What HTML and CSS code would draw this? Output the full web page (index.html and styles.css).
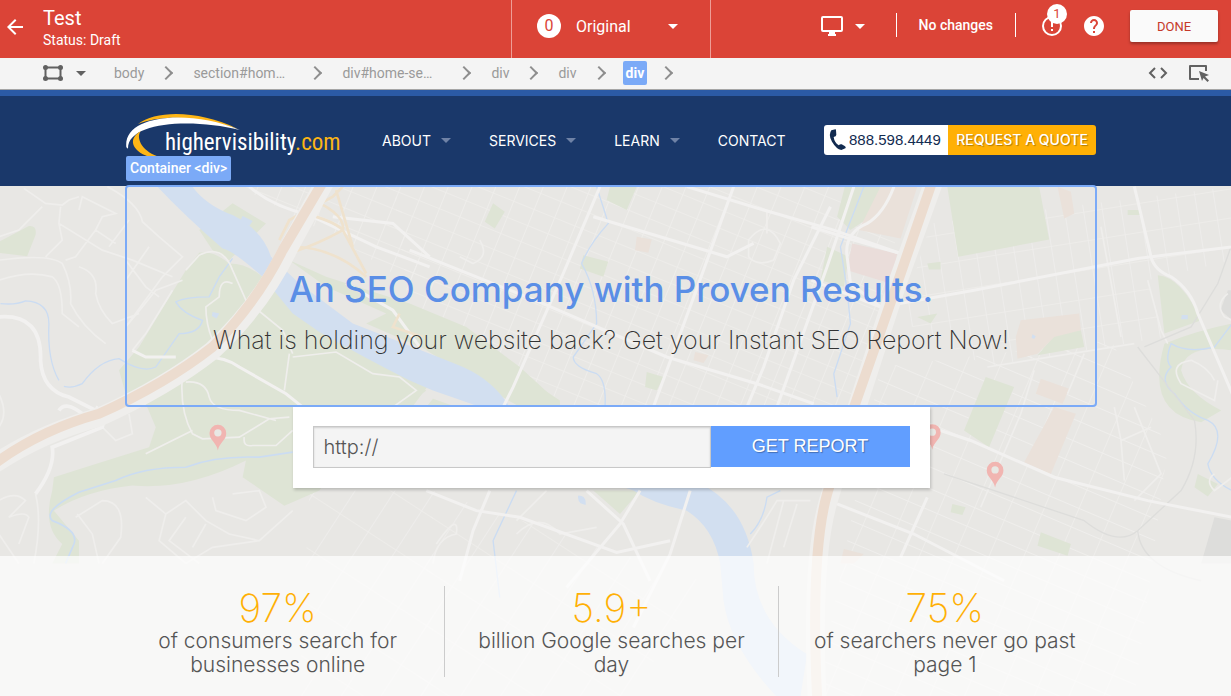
FILE: index.html
```html
<!DOCTYPE html>
<html lang="en">
<head>
<meta charset="utf-8">
<meta name="viewport" content="width=device-width, initial-scale=1">
<title>Test – Original</title>
<link rel="stylesheet" href="styles.css">
</head>
<body>
<header class="topbar">
  <div class="topbar-left">
    <button class="icon-btn back" aria-label="Back">
      <svg width="16" height="16" viewBox="0 0 16 16"><path fill="#fff" d="M16 7H3.830l5.590-5.590L8 0 0 8l8 8 1.410-1.410L3.830 9H16z"/></svg>
    </button>
    <div class="titles">
      <h1 class="exp-name">Test</h1>
      <p class="exp-status">Status: Draft</p>
    </div>
  </div>
  <button class="variant">
    <span class="variant-num">0</span>
    <span class="variant-name">Original</span>
    <svg width="10" height="5" viewBox="0 0 10 5"><path d="M0 0h10L5 5z" fill="#fff"/></svg>
  </button>
  <div class="topbar-right">
    <button class="icon-btn device" aria-label="Device">
      <svg width="22" height="20" viewBox="0 0 22 20"><path d="M2 0h18a2 2 0 0 1 2 2v12a2 2 0 0 1-2 2h-6v2h1v2H7v-2h1v-2H2a2 2 0 0 1-2-2V2a2 2 0 0 1 2-2zM2 2v12h18V2z" fill="#fff" fill-rule="evenodd"/></svg>
      <svg width="10" height="5" viewBox="0 0 10 5"><path d="M0 0h10L5 5z" fill="#fff"/></svg>
    </button>
    <p class="changes">No changes</p>
    <button class="icon-btn alert" aria-label="Alerts">
      <svg width="20" height="20" viewBox="0 0 20 20"><circle cx="10" cy="10" r="9" fill="none" stroke="#fff" stroke-width="2"/><path d="M9 5h2v6H9zM9 13h2v2H9z" fill="#fff"/></svg>
      <span class="badge">1</span>
    </button>
    <button class="icon-btn" aria-label="Help">
      <svg width="20" height="20" viewBox="2 2 20 20"><path fill="#fff" d="M12 2C6.480 2 2 6.480 2 12s4.480 10 10 10 10-4.480 10-10S17.520 2 12 2zm1 17h-2v-2h2v2zm2.070-7.750l-.9.920C13.450 12.900 13 13.500 13 15h-2v-.5c0-1.100.45-2.100 1.170-2.830l1.240-1.260c.37-.36.590-.86.590-1.410 0-1.100-.9-2-2-2s-2 .9-2 2H8c0-2.210 1.790-4 4-4s4 1.790 4 4c0 .88-.36 1.680-.93 2.250z"/></svg>
    </button>
    <button class="done">DONE</button>
  </div>
</header>

<nav class="crumbs" aria-label="Element path">
  <button class="icon-btn shape" aria-label="Selection mode">
    <svg width="20" height="16" viewBox="0 0 20 16" fill="#616161"><path d="M2.500 2.500h15v11h-15z" fill="none" stroke="#616161" stroke-width="2"/><circle cx="2.500" cy="2.500" r="2.500"/><circle cx="17.500" cy="2.500" r="2.500"/><circle cx="2.500" cy="13.500" r="2.500"/><circle cx="17.500" cy="13.500" r="2.500"/></svg>
    <svg width="10" height="5" viewBox="0 0 10 5"><path d="M0 0h10L5 5z" fill="#616161"/></svg>
  </button>
  <ol class="path">
    <li><a href="#">body</a></li>
    <li class="long"><a href="#">section#hom…</a></li>
    <li class="long"><a href="#">div#home-se…</a></li>
    <li><a href="#">div</a></li>
    <li><a href="#">div</a></li>
    <li><a href="#" class="current">div</a></li>
  </ol>
  <div class="tools">
    <button class="icon-btn" aria-label="Edit code">
      <svg width="20" height="12" viewBox="0 0 20 12" fill="none" stroke="#616161" stroke-width="2"><path d="M7 1L2 6l5 5M13 1l5 5-5 5"/></svg>
    </button>
    <button class="icon-btn" aria-label="Select element">
      <svg width="21" height="18" viewBox="0 0 21 18"><path d="M18 7V2H2v13h9" fill="none" stroke="#616161" stroke-width="2" stroke-linejoin="round"/><path d="M11 7l10 4-4 1.500 4 4-1.500 1.500-4-4-1.500 3z" fill="#616161"/></svg>
    </button>
  </div>
</nav>

<main class="site">
  <header class="site-header">
    <div class="container nav-row">
      <a class="logo" href="#" aria-label="highervisibility.com">
        <svg class="swoosh" width="114" height="44" viewBox="0 0 342 132">
          <path d="M36 33C90-9 220-9 335 48C225 10 110 2 36 33z" fill="#fdb515"/>
          <path d="M1 103C-10 5 190-12 341 51C200 16 5 25 6 107z" fill="#fff"/>
          <path d="M44 55C30 72 44 112 94 130L70 132C12 112 8 75 44 55z" fill="#fdb515"/>
        </svg>
        <span class="logo-text">highervisibility<span class="tld">.com</span></span>
      </a>
      <nav class="menu" aria-label="Main">
        <a class="has-sub" href="#">ABOUT</a>
        <a class="has-sub" href="#">SERVICES</a>
        <a class="has-sub" href="#">LEARN</a>
        <a href="#">CONTACT</a>
      </nav>
      <div class="cta">
        <a class="phone" href="tel:8885984449">
          <svg width="17" height="22" viewBox="0 0 51 66"><path d="M19 1L7 4Q-3 18 9 38Q22 60 37 63L49 58Q52 54 47 51L38 46Q34 44 29 49Q16 40 14 24Q22 22 22 17L21 4Q21 0 19 1z" fill="#122b50"/></svg>
          888.598.4449</a>
        <a class="quote" href="#">REQUEST A QUOTE</a>
      </div>
    </div>
  </header>

  <section class="hero">
    <svg class="map" viewBox="0 18 3693 1530" preserveAspectRatio="xMidYMin slice" aria-hidden="true">
      <defs>
        <pattern id="g1" width="66" height="52" patternUnits="userSpaceOnUse" patternTransform="rotate(22)"><path d="M0 0H66M0 0V52" class="st"/></pattern>
        <pattern id="g2" width="56" height="86" patternUnits="userSpaceOnUse" patternTransform="rotate(-9)"><path d="M0 0H56M0 0V86" class="st"/></pattern>
        <pattern id="g3" width="96" height="60" patternUnits="userSpaceOnUse" patternTransform="rotate(23)"><path d="M0 0H96M0 0V60" class="st"/></pattern>
        <pattern id="g4" width="100" height="140" patternUnits="userSpaceOnUse" patternTransform="rotate(33)"><path d="M0 0H100M0 0V140" class="st"/></pattern>
        <g id="pin"><path d="M0 75C-4 50-25 45-25 23A25 25 0 0 1 25 23C25 45 4 50 0 75z" fill="#f1b5b1"/><circle cy="22" r="11" fill="#e8e8e4"/></g>
      </defs>
      <rect y="18" width="3693" height="1530" fill="#e8e7e4"/>

      <!-- street grids -->
      <path d="M720 20H1180L1290 330 1180 280 1040 190z" fill="url(#g1)"/>
      <path d="M1180 20H2720L2570 700H1700L1230 400z" fill="url(#g1)"/>
      <path d="M2790 130L3693 20V240L3440 300L3490 470L2960 560L2700 420z" fill="url(#g2)"/>
      <path d="M2640 560L3330 480L3500 800L3400 1548H2450z" fill="url(#g3)"/>
      <path d="M1300 930L2100 1200L1900 1548H1250z" fill="url(#g4)"/>
      <path d="M930 930H1300V1548H900z" fill="url(#g4)"/>

      <!-- parks -->
      <g class="park">
        <path d="M0 185L90 138Q115 135 110 165L85 228L0 218z"/>
        <path d="M600 150L700 70L800 130L730 200L690 240L640 210z"/>
        <path d="M600 218Q640 210 690 250Q750 250 800 300L900 410L1060 500L1290 610L1230 690L1150 760L1000 870L960 930L855 975L730 890L740 840Q560 930 400 915Q260 930 165 990L240 1080L240 1148H160L190 1090Q130 1040 160 930L165 890L290 850L450 800L470 740L440 670L380 640L360 570L420 500L560 270z"/>
        <path d="M870 240L980 320L1160 400L1100 430L1400 560L1550 650L1680 680V660L1530 560L1300 420L1230 370L980 290z"/>
        <path d="M1230 370L1400 440L1560 560L1680 670V690H1580L1490 640L1280 510z"/>
        <path d="M1480 70L1515 95 1485 145 1455 125zM1750 225L1825 245 1810 290 1740 265zM1830 20H1910L1880 90L1820 60zM1940 575L1990 590 1970 630 1935 620zM1780 930H1920L1860 1000z"/>
        <path d="M2840 20H3115L3145 178L2873 230zM2533 20H2660L2610 110L2550 150L2510 110zM2480 200L2545 230L2530 320L2460 300z"/>
        <path d="M2955 590L3040 620L2965 800L2890 750zM3170 455L3240 450 3250 500 3110 525zM3470 285Q3540 290 3600 420L3490 460zM3490 490Q3590 450 3693 430V510Q3550 490 3540 570Q3560 640 3660 690L3600 725Q3430 700 3490 490z"/>
        <path d="M2855 970L2895 980 2885 1003 2850 995zM3120 1055L3210 1090 3200 1125 3110 1095zM3590 880L3650 910 3620 948 3580 920zM2780 250L2820 245V268H2785zM2750 410L2810 400 2790 430zM3380 90h40v15h-40z"/>
      </g>
      <g class="tan">
        <path d="M2640 20H2750L2700 175L2575 150zM3170 20L3210 35 3220 100 3190 115zM3060 420L3235 400 3240 450 3160 470 3110 520 3050 535 3045 470zM3120 595L3205 625 3185 670 3105 640zM3160 680L3225 700 3150 880 3070 845zM1910 170L1955 178 1945 218 1905 210zM2085 515L2125 525 2110 548 2080 540zM2530 1105L2590 1120 2560 1148H2520z"/>
        <path d="M2555 190L2690 220 2670 310 2540 270z" fill="#eaddda"/>
      </g>
      <path d="M3640 1010L3693 1020V1148H3600zM3680 330h13v90l-35-30z" fill="#dddddb"/>

      <!-- river -->
      <g fill="#d2dff0">
        <path d="M475 20H580Q620 75 700 105Q790 150 815 230L900 310L1060 430Q1290 520 1390 560Q1480 600 1530 680Q1700 760 1920 880Q2060 870 2150 940Q2240 1010 2260 1148Q2260 1320 2420 1420L2400 1548H2330Q2190 1400 2170 1260L2160 1148Q2140 1040 2060 990Q1960 970 1900 930Q1650 850 1500 700L1300 630L1230 600Q1090 530 960 455L880 400L790 290Q700 210 670 205Q560 110 475 20z"/>
        <path d="M730 108l30 15-10 15-28-14zM640 395l20 5-8 15-14-8zM1735 945q25 0 22 28l-15-5q-10-10-7-23zM3542 404h18v13h-20zM3095 462l10 6-5 8-8-4z"/>
      </g>
      <path class="park" d="M1230 600L1280 630L1235 665L1190 670zM1300 655L1370 680H1280z"/>
      <g class="water">
        <path d="M700 235L660 290L630 350Q560 350 530 365Q550 400 610 420Q600 460 540 460L470 560Q430 580 360 535Q300 540 250 610Q220 625 195 618"/>
        <path d="M5 370Q50 375 80 362Q150 365 150 430Q145 540 180 600"/>
        <path d="M880 815L780 830Q650 825 560 860Q430 860 350 900L240 935Q130 990 160 1020Q240 1050 225 1090L200 1148" stroke-width="5"/>
        <path d="M1790 20L1825 130Q1770 190 1745 250Q1790 330 1790 430L1720 530Q1720 560 1790 580Q1820 600 1815 680M2590 20L2520 200L2540 330L2550 430L2500 580L2510 650"/>
        <path d="M1550 930L1480 1080L1500 1250M2250 1060Q2290 1020 2300 950L2340 930"/>
        <path d="M3693 430L3640 500Q3560 520 3510 490Q3490 540 3510 560Q3470 600 3520 640Q3560 700 3620 720Q3680 750 3620 850Q3630 900 3693 930"/>
      </g>

      <!-- minor streets -->
      <g class="st">
        <path d="M75 25L140 70L190 75L210 60L240 50M180 130L190 180L140 230M185 80L180 130L310 210L400 240L520 290M240 90L250 50L350 100L310 110L290 150L350 190M325 20Q420 70 430 125L480 170L550 230L490 290L380 440M380 240L440 320L480 350M450 200L380 300M0 240Q150 220 190 250Q220 310 215 370Q250 440 320 490M0 300Q90 270 160 290Q190 310 190 400L240 440M240 260Q300 280 290 340Q300 390 340 430L420 400M330 200L390 120M130 80L60 150L0 170M290 150L230 230L200 240"/>
        <path d="M560 270L600 225Q670 190 700 270L740 360L850 450L880 520M520 330L440 460L400 510M380 440L430 380L470 330L550 300M700 310Q660 290 660 350L620 380Q620 430 640 480M0 640Q30 700 0 740M310 740L350 780L400 760L390 700"/>
        <path d="M550 580Q540 690 580 760L610 775L720 770L810 715L870 710M560 605Q620 600 630 650Q640 690 720 690L830 720M735 770Q730 800 760 795H830L880 750M440 820L580 750M870 520L855 630M880 530L1010 515L1120 580L1200 590L1250 630L1180 680"/>
        <path d="M0 960Q50 930 80 960L30 1010Q80 990 90 1010L60 1090M110 940Q130 1020 105 1148M0 1060L60 1148M230 1010L310 960Q380 960 365 1070L310 1148M235 1000L280 1060L300 1148M440 950L500 1000L480 1080L560 1148M500 1000L560 960L620 1020L690 1060L780 1080M560 1010L510 1080L600 1148M620 1030L580 1100M700 940L780 930L800 980L740 1020L650 990L640 950M880 990L780 1080L640 1100L560 1148"/>
        <path d="M1310 1090Q1380 990 1370 1060Q1310 1070 1300 1148M1550 1020L1640 930M1550 1060Q1620 990 1680 1060L1790 1040M2240 1100Q2300 1010 2330 960H2430M2350 960L2300 1148M2390 970L2350 1100"/>
        <path d="M1440 180Q1470 230 1420 250L1380 230M2245 180Q2300 110 2340 190L2320 240Q2270 260 2245 230zM2300 90V160M3640 600Q3620 560 3570 540Q3500 550 3540 610L3640 660L3650 600M3680 340Q3640 370 3670 410L3693 420M3640 880Q3610 900 3640 930L3693 890"/>
        <path d="M3440 300L3480 450L3500 490M3300 140L3360 470M2960 560L3400 490M3100 570L3060 700L2940 980M3250 520L3200 640M3340 680L3360 780L3450 740M3360 780L3370 900M3400 680L3480 880L3400 960"/>
      </g>
      <path d="M2830 880L3250 1020Q3350 1100 3410 1050L3540 930Q3600 830 3580 720L3410 500M3410 1050Q3420 1160 3600 1200M3430 500L3570 440L3650 310L3693 190" fill="none" stroke="#dddddb" stroke-width="4"/>

      <!-- arterials -->
      <g class="rd">
        <path d="M750 20Q820 80 930 105L1130 200L1290 260M1230 210L1630 370L2000 530L2270 610L2440 670M2060 20L2290 90L2500 150L2700 220M1780 110L2180 230L2260 190M1800 20L1690 280L1540 620L1500 700M2200 20L2110 270L1960 680M2490 80L2380 300L2290 560L2240 680M2560 20L2480 260L2330 680M2433 300L2640 380L2920 330L3410 235L3693 200"/>
        <path d="M3400 20L3450 230Q3460 270 3510 290Q3570 330 3590 400L3693 640M2820 750L2910 780L3160 890L3440 960L3693 1010M2510 970L2740 1060L3010 1200M1280 930L1430 990L1560 1010L1850 1115L2010 1080M1470 930L1420 1050L1380 1200M1760 930L1870 1030L1950 1200M1920 930L1860 1030L1700 1220M2070 930L2010 1120L1900 1340M2700 1130L2780 950"/>
        <path d="M2680 20Q2650 100 2600 130Q2530 160 2540 230L2550 310L2640 380M2433 140L2560 180L2700 220M2640 410L2560 680M400 510L440 530L530 530M615 530Q680 530 720 560L860 640L910 680M1040 310L1180 390L1260 500M1000 110L1180 130L1290 230"/>
        <path d="M0 410Q130 400 125 540Q130 630 210 650L290 690M180 690Q200 660 250 700M290 680Q320 700 310 740L160 800Q170 860 110 940" stroke-width="11"/>
      </g>
      <g fill="none" stroke="#efe2cd" stroke-width="8">
        <path d="M840 180L870 120L1000 50L1030 20M870 220Q960 190 1030 150Q1040 100 920 50M910 100Q1000 120 1030 150L1100 280M880 200Q1000 200 1100 290M1010 30L1060 200M1200 400L1180 440L1270 470"/>
      </g>

      <!-- freeways -->
      <g fill="none" stroke-linejoin="round">
        <path d="M-20 855Q120 760 300 710Q500 620 640 510Q790 370 870 200L985 -10M2805 -10L2690 310L2550 740L2490 940Q2430 1120 2450 1548" stroke="#efeeec" stroke-width="56"/>
        <path d="M-20 855Q120 750 300 700Q500 610 640 500Q770 370 850 210L980 -10M2800 -10L2690 310L2540 740L2480 940Q2430 1120 2450 1548" stroke="#ecdccf" stroke-width="30"/>
      </g>

      <use href="#pin" x="656" y="735"/>
      <use href="#pin" x="2795" y="733"/>
      <use href="#pin" x="2983" y="846"/>
    </svg>

    <div class="container pitch">
      <span class="tag">Container &lt;div&gt;</span>
      <h2 class="headline">An SEO Company with Proven Results.</h2>
      <p class="sub">What is holding your website back? Get your Instant SEO Report Now!</p>
    </div>
    <form class="report">
      <input class="url" type="text" value="http://" aria-label="Website address">
      <button class="go" type="button">GET REPORT</button>
    </form>
    <div class="stats">
      <ul class="stat-list">
        <li><strong>97%</strong>of consumers search for businesses online</li>
        <li><strong>5.9+</strong>billion Google searches per day</li>
        <li><strong>75%</strong>of searchers never go past page 1</li>
      </ul>
    </div>
  </section>
</main>
</body>
</html>
```

FILE: styles.css
```css
* { box-sizing: border-box; }
body { margin: 0; font-family: Roboto, "Liberation Sans", sans-serif; background: #e8e7e4; }
h1, h2, p, ul, ol { margin: 0; padding: 0; font-weight: 400; }
ul, ol { list-style: none; }
a { color: inherit; text-decoration: none; }
button { font: inherit; border: 0; background: none; padding: 0; color: inherit; cursor: pointer; }
svg { display: block; flex: none; }

/* editor top bar */
.topbar { display: grid; grid-template-columns: 511fr 200px 520fr; height: 58px; background: #db4437; color: #fff; }
.topbar-left { display: flex; align-items: center; gap: 20px; padding: 0 0 4px 7px; }
.icon-btn { display: flex; align-items: center; }
.exp-name { font-size: 20px; line-height: 22px; padding-top: 4px; }
.exp-status { font-size: 14px; line-height: 22px; }
.variant { display: flex; align-items: center; padding: 0 32px 6px 25px; border: solid #ee9d96; border-width: 0 1px; font-size: 16px; }
.variant-num { width: 24px; height: 24px; margin-right: 15px; border-radius: 50%; background: #fff; color: #db4437; line-height: 24px; }
.variant-name { flex: 1; text-align: left; }
.topbar-right { display: flex; align-items: center; justify-content: flex-end; gap: 22px; padding: 0 13px 6px 0; }
.device { gap: 12px; margin-right: 9px; }
.changes { padding: 0 22px; border: solid #fff; border-width: 0 1px; font-size: 14px; font-weight: 500; line-height: 24px; margin: 0 4px 2px 0; }
.alert { position: relative; }
.badge { position: absolute; left: 5px; top: -12px; width: 20px; height: 20px; border-radius: 50%; background: #fff; color: #db4437; font-size: 13px; line-height: 20px; text-align: center; }
.done { width: 88px; height: 32px; margin-left: 4px; border-radius: 2px; background: #fafafa; color: #c53929; font-size: 13px; box-shadow: 0 2px 3px rgba(0, 0, 0, .3); }

/* element path */
.crumbs { display: flex; align-items: center; height: 32px; padding: 0 22px 1px 43px; background: #f4f4f4; border-bottom: 1px solid #a6a6a6; color: #9a9a9a; font-size: 14px; }
.shape { gap: 13px; margin-right: 28px; }
.path { display: flex; flex: 1; }
.path li { display: flex; align-items: center; }
.path .long a { width: 100px; }
.path li::after { content: ""; width: 8px; height: 8px; margin: 0 22px 0 17px; border: solid #8e8e8e; border-width: 2px 2px 0 0; transform: rotate(45deg); }
.path .current { margin: 0 -3px; padding: 0 3px; border-radius: 2px; background: #7baaf7; color: #fff; font-weight: 700; line-height: 24px; }
.tools { display: flex; align-items: center; gap: 20px; }

/* edited site */
.site { font-family: Inter, "Liberation Sans", sans-serif; }
.site-header, .hero { padding-right: 9px; }
.site-header { background: #1a386a; border-top: 6px solid #2b5aa5; }
.container { width: 100%; max-width: 970px; margin: 0 auto; }
.nav-row { display: flex; align-items: center; height: 90px; padding-bottom: 2px; color: #fff; }
.logo { position: relative; width: 256px; height: 54px; }
.swoosh { position: absolute; left: 0; top: 0; }
.logo-text { position: absolute; left: 39px; top: 12px; font-family: "Roboto Condensed", "Liberation Sans Narrow", Roboto, sans-serif; font-size: 23px; line-height: 36px; }
.tld { color: #fdb515; }
.menu { display: flex; flex: 1; font-size: 14px; gap: 38px; }
.has-sub { display: flex; align-items: center; gap: 10px; }
.has-sub::after { content: ""; border: 5px solid transparent; border-top-color: #6f82a6; border-bottom: 0; }
.cta { display: flex; height: 30px; border-radius: 3px; overflow: hidden; font-size: 14px; line-height: 30px; }
.phone { display: flex; align-items: center; gap: 3px; width: 124px; padding-left: 5px; background: #fff; color: #122b50; font-family: "Liberation Sans", sans-serif; font-size: 15px; white-space: nowrap; }
.quote { width: 148px; background: #ffb005; font-weight: 500; text-align: center; white-space: nowrap; color: #fff; text-shadow: 1px 1px 1px rgba(0, 0, 0, .3); }

.hero { position: relative; }
.map { position: absolute; left: 0; top: 0; width: 100%; height: 100%; }
.st { fill: none; stroke: #efeeec; stroke-width: 5; }
.rd { fill: none; stroke: #f2f1f0; stroke-width: 9; }
.park { fill: #dee4d5; }
.tan { fill: #eae1da; }
.water { fill: none; stroke: #cbdcf2; stroke-width: 4; }
.pitch { position: relative; z-index: 1; padding: 80px 0 45px; outline: 2px solid #7baaf7; outline-offset: -1px; border-radius: 3px; text-align: center; }
.tag { position: absolute; left: 0; top: -30px; padding: 0 4px; border-radius: 2px; background: #7baaf7; color: #fff; font: 500 14px/25px Roboto, sans-serif; }
.headline { color: #5a8ee6; font-size: 35px; font-weight: 500; line-height: 46px; }
.sub { margin-top: 8px; color: #333; font-size: 25px; font-weight: 200; line-height: 41px; }
.report { position: relative; display: flex; width: 637px; max-width: 100%; margin: 0 auto; padding: 20px; background: #fff; box-shadow: 1px 2px 3px rgba(0, 0, 0, .2); }
.url { flex: 1; min-width: 0; height: 42px; padding: 0 10px; border: 1px solid #c8c8c8; border-radius: 0; background: #f4f4f4; box-shadow: inset 0 1px 2px rgba(0, 0, 0, .15); color: #555; font: 300 20px Inter, sans-serif; }
.go { width: 199px; height: 41px; background: #619eff; color: #fff; font-family: "Liberation Sans", sans-serif; font-size: 18px; text-shadow: 1px 1px 1px rgba(0, 0, 0, .3); }
.stats { position: relative; margin: 68px -9px 0 0; padding: 30px 9px 20px 0; background: rgba(255, 255, 255, .7); }
.stat-list { display: grid; grid-template-columns: repeat(3, 1fr); max-width: 1000px; margin: 0 auto; }
.stat-list li { padding: 0 30px; color: #555; font-size: 21px; font-weight: 300; line-height: 24px; text-align: center; }
.stat-list li + li { border-left: 1px solid #ccc; }
.stat-list strong { display: block; color: #ffb005; font-size: 39px; font-weight: 200; line-height: 43px; }
```
